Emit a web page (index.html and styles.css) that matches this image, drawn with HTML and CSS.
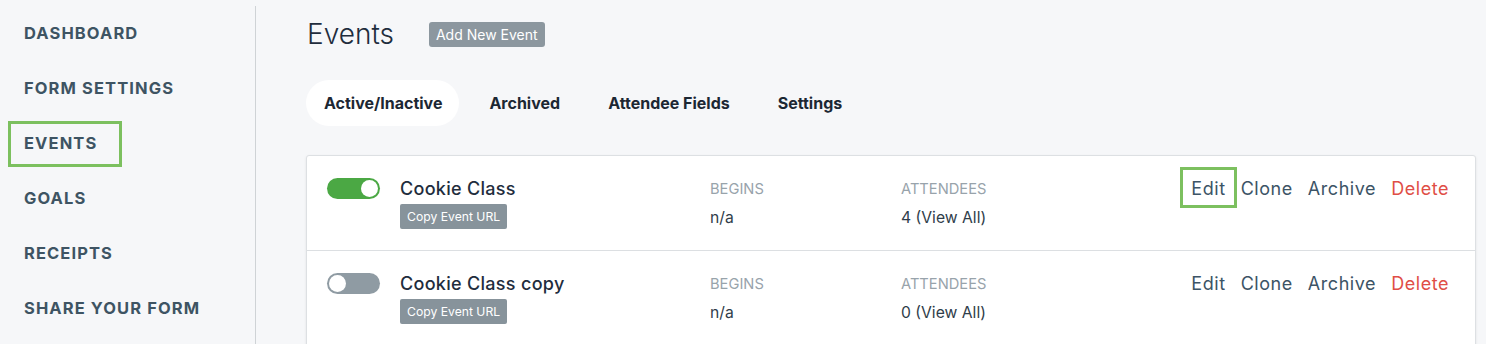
FILE: index.html
```html
<!DOCTYPE html>
<html>
<head>
<meta charset="utf-8">
<link rel="stylesheet" href="styles.css">
</head>
<body>
<div class="layout">
  <nav class="sidebar">
    <div class="nav-item">DASHBOARD</div>
    <div class="nav-item">FORM SETTINGS</div>
    <div class="nav-item active">EVENTS</div>
    <div class="nav-item">GOALS</div>
    <div class="nav-item">RECEIPTS</div>
    <div class="nav-item">SHARE YOUR FORM</div>
  </nav>
  <main class="main">
    <header class="page-header">
      <h1 class="title">Events</h1>
      <button class="btn-add">Add New Event</button>
    </header>
    <div class="tabs">
      <div class="tab selected">Active/Inactive</div>
      <div class="tab">Archived</div>
      <div class="tab">Attendee Fields</div>
      <div class="tab">Settings</div>
    </div>
    <section class="card">
      <div class="row">
        <div class="toggle-col"><span class="toggle on"><span class="knob"></span></span></div>
        <div class="name-col">
          <div class="event-name">Cookie Class</div>
          <button class="btn-copy">Copy Event URL</button>
        </div>
        <div class="begins-col">
          <div class="label">BEGINS</div>
          <div class="value">n/a</div>
        </div>
        <div class="att-col">
          <div class="label">ATTENDEES</div>
          <div class="value">4 (View All)</div>
        </div>
        <div class="actions">
          <span class="action highlight">Edit</span>
          <span class="action">Clone</span>
          <span class="action">Archive</span>
          <span class="action delete">Delete</span>
        </div>
      </div>
      <div class="row">
        <div class="toggle-col"><span class="toggle off"><span class="knob"></span></span></div>
        <div class="name-col">
          <div class="event-name">Cookie Class copy</div>
          <button class="btn-copy">Copy Event URL</button>
        </div>
        <div class="begins-col">
          <div class="label">BEGINS</div>
          <div class="value">n/a</div>
        </div>
        <div class="att-col">
          <div class="label">ATTENDEES</div>
          <div class="value">0 (View All)</div>
        </div>
        <div class="actions">
          <span class="action">Edit</span>
          <span class="action">Clone</span>
          <span class="action">Archive</span>
          <span class="action delete">Delete</span>
        </div>
      </div>
    </section>
  </main>
</div>
</body>
</html>
```
FILE: styles.css
```css
* { box-sizing: border-box; }
html, body { margin: 0; padding: 0; }
body {
  background: #f6f7f9;
  font-family: "Inter", "Liberation Sans", sans-serif;
  color: #1f2d3d;
  overflow: hidden;
  height: 344px;
}
.layout { display: flex; height: 344px; }

.sidebar {
  width: 256px;
  flex: none;
  padding-top: 5px;
  margin-top: 6px;
  border-right: 1px solid #cfd3d6;
}
.nav-item {
  display: block;
  width: max-content;
  height: 46px;
  line-height: 38px;
  margin: 0 0 9px 8px;
  padding: 0 24px 0 13px;
  border: 3px solid transparent;
  font-size: 16.5px;
  font-weight: 700;
  letter-spacing: 1.1px;
  color: #3e5463;
}
.nav-item.active { border-color: #7cc05f; padding-right: 22px; }

.main { flex: 1; padding: 0 10px 0 50px; }
.page-header {
  display: flex;
  align-items: center;
  gap: 35px;
  height: 68px;
}
.title {
  margin: 0;
  font-size: 28px;
  font-weight: 300;
  color: #1f2d3d;
  padding-left: 1px;
}
.btn-add {
  border: 0;
  background: #8c979f;
  color: #fff;
  font-family: inherit;
  font-size: 14px;
  height: 25px;
  padding: 0 7px;
  border-radius: 3px;
}
.tabs {
  display: flex;
  gap: 12px;
  margin-top: 12px;
  height: 46px;
}
.tab {
  padding: 0 18px;
  border-radius: 23px;
  line-height: 47px;
  font-size: 16px;
  font-weight: 700;
  color: #1c2733;
}
.tab.selected { background: #fff; padding-right: 17px; }
.tab.wide { letter-spacing: 0.2px; }

.card {
  margin-top: 29px;
  width: 1170px;
  background: #fff;
  border: 1px solid #dde0e3;
  border-radius: 3px;
  box-shadow: 0 1px 3px rgba(0,0,0,0.08);
}
.row {
  display: flex;
  align-items: flex-start;
  height: 95px;
  padding: 22px 26px 0 20px;
  border-bottom: 1px solid #dcdfe2;
}
.toggle-col { width: 73px; flex: none; }
.toggle {
  display: flex;
  align-items: center;
  width: 53px;
  height: 21px;
  border-radius: 11px;
  padding: 0 2px;
}
.toggle.on { background: #4ba844; justify-content: flex-end; }
.toggle.off { background: #8f9ba3; justify-content: flex-start; }
.knob {
  width: 17px;
  height: 17px;
  border-radius: 50%;
  background: #fff;
}
.name-col { width: 310px; flex: none; padding-top: 1px; }
.event-name {
  font-size: 18px;
  font-weight: 500;
  letter-spacing: 0.3px;
  line-height: 20px;
  color: #1f2d3d;
}
.btn-copy {
  margin-top: 5px;
  border: 0;
  background: #87939b;
  color: #fff;
  font-family: inherit;
  font-size: 12.2px;
  height: 25px;
  padding: 0 7px;
  border-radius: 2px;
}
.begins-col { width: 191px; flex: none; padding-top: 1px; }
.att-col { flex: 1; padding-top: 1px; }
.label {
  font-size: 14.7px;
  line-height: 20px;
  color: #98a3ab;
}
.value {
  margin-top: 9px;
  font-size: 15.7px;
  line-height: 20px;
  color: #2f3d4a;
}
.actions {
  display: flex;
  gap: 15px;
  padding-top: 1px;
}
.action {
  position: relative;
  font-size: 18px;
  letter-spacing: 0.55px;
  line-height: 20px;
  color: #3c5466;
}
.action.delete { color: #e04e46; }
.action.highlight::after {
  content: "";
  position: absolute;
  left: -11px;
  right: -11px;
  top: -12px;
  bottom: -9px;
  border: 3px solid #7cc05f;
}
```
